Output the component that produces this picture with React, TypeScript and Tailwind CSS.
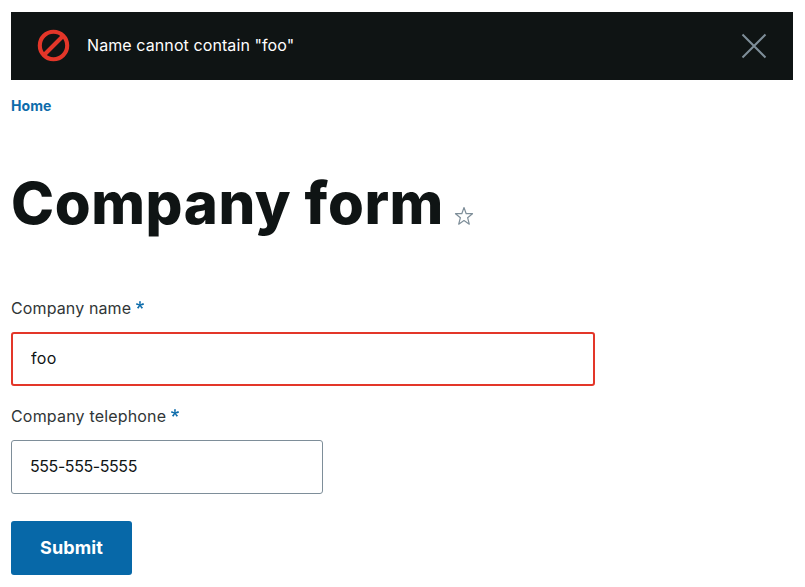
import React from "react";

function RequiredMark() {
  return (
    <svg className="mt-[5px] ml-[5px] h-2 w-2" viewBox="0 0 16 16" fill="#0d6cab" aria-label="required">
      <path d="m0 7.562 1.114-3.438c2.565.906 4.43 1.688 5.59 2.35C6.398 3.553 6.237 1.544 6.22.447h3.511c-.05 1.597-.234 3.6-.558 6.003 1.664-.838 3.566-1.613 5.714-2.325L16 7.562c-2.05.678-4.06 1.131-6.028 1.356.984.856 2.372 2.381 4.166 4.575l-2.906 2.059c-.935-1.274-2.041-3.009-3.316-5.206-1.194 2.275-2.244 4.013-3.147 5.206l-2.856-2.059c1.872-2.307 3.211-3.832 4.017-4.575C3.849 8.516 1.872 8.062 0 7.562" />
    </svg>
  );
}

function Label({ text, tracking }: { text: string; tracking: string }) {
  return (
    <label className="flex h-6 text-[16px] leading-6 text-[#313637]">
      <span className={tracking}>{text}</span>
      <RequiredMark />
    </label>
  );
}

export default function App() {
  return (
    <main className="flex h-[587px] w-[805px] flex-col bg-white pt-3 pr-3 pl-[11px] font-['Inter',sans-serif] text-[#0f1414]">
      <div role="alert" className="flex h-[68px] shrink-0 items-center bg-[#0f1414] pr-[26px] pl-[26px] text-white">
        <svg className="mb-[1px] h-[33px] w-[33px]" viewBox="0 0 33 33" fill="none" stroke="#e33629" strokeWidth="4.1">
          <circle cx="16.5" cy="16.5" r="13.7" />
          <path d="m7 26 19-19" />
        </svg>
        <span className="mb-[2px] ml-[17px] text-[16px] leading-6 tracking-[0.09px]">Name cannot contain "foo"</span>
        <button className="ml-auto h-[26px] w-[26px]" aria-label="Close">
          <svg viewBox="0 0 26 26" fill="none" stroke="#7e8e99" strokeWidth="2">
            <path d="m1.5 1.5 23 23M24.5 1.5l-23 23" />
          </svg>
        </button>
      </div>
      <nav className="mt-[17px] h-[18px] text-[14px] leading-[18px] font-bold tracking-[0.1px] text-[#0d6cab]">
        <a>Home</a>
      </nav>
      <div className="mt-[52px] flex h-[72px]">
        <h1 className="w-[443px] text-[58px] leading-[72px] font-extrabold tracking-[0.6px] whitespace-nowrap">Company form</h1>
        <svg className="mt-[39px] h-[20px] w-[20px]" viewBox="0 0 20 20" fill="none" stroke="#7e8e99" strokeWidth="1.2" strokeLinejoin="round">
          <path d="m10 1.5 2.2 6.2h6.3l-4.9 4 1.7 6.5L10 14.6l-5.3 3.6 1.7-6.5-4.9-4h6.3Z" />
        </svg>
      </div>
      <form className="mt-[57px] flex flex-col">
        <Label text="Company name" tracking="tracking-[0.12px]" />
        <input className="mt-[12px] h-[54px] w-[584px] rounded-[3px] border-2 border-[#e33629] pb-[2px] pl-[18px] text-[16px] tracking-[0.4px] outline-none" defaultValue="foo" />
        <div className="mt-[18px]">
          <Label text="Company telephone" tracking="tracking-[0.18px]" />
        </div>
        <input className="mt-[12px] h-[54px] w-[312px] rounded-[3px] border border-[#7e8e99] pb-[2px] pl-[18px] text-[16px] tracking-[-0.42px] outline-none" defaultValue="555-555-5555" />
        <button type="button" className="mt-[27px] h-[54px] w-[121px] rounded-[3px] bg-[#0768a8] pb-[2px] text-[18px] font-bold tracking-[0.1px] text-white">Submit</button>
      </form>
    </main>
  );
}
